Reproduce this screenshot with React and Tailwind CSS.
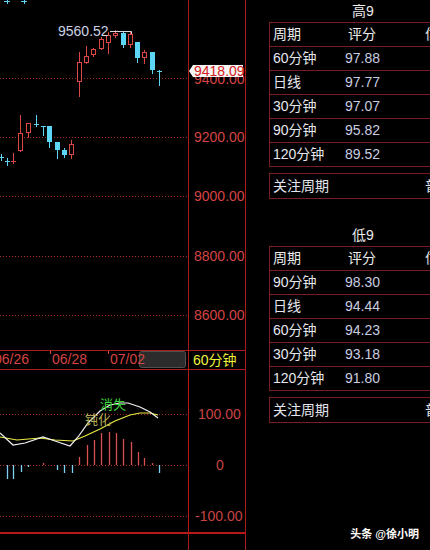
import React from "react";

const RED = "#dc4848";
const CYAN = "#5cd6f4";
const GRID = "#a32a2a";

// [x, bodyTop, bodyBottom, high, low, up]
const candles = [
  [1, 157, 157, 154, 160, 0],
  [7, 161, 161, 158, 165, 0],
  [13, 161, 161, 153, 163, 1],
  [20, 133, 151, 115, 151, 1],
  [28, 123, 133, 123, 137, 1],
  [36, 124, 124, 115, 126, 0],
  [43, 126, 126, 126, 135, 0],
  [49, 126, 142, 126, 147, 0],
  [57, 142, 150, 142, 158, 0],
  [64, 150, 155, 148, 157, 0],
  [71, 144, 155, 140, 158, 1],
  [79, 62, 82, 52, 96, 1],
  [86, 56, 63, 46, 63, 1],
  [93, 49, 55, 48, 56, 1],
  [101, 39, 49, 37, 49, 1],
  [108, 35, 43, 32, 53, 1],
  [115, 33, 36, 30, 37, 1],
  [123, 33, 45, 31, 47, 0],
  [130, 34, 45, 31, 47, 1],
  [137, 42, 58, 42, 62, 0],
  [144, 52, 58, 50, 63, 1],
  [152, 52, 70, 52, 73, 0],
  [159, 71, 71, 70, 85, 0],
];

// [x, end] relative to zero line at 465
const bars = [
  [7, 479], [13, 479], [21, 472], [28, 467], [43, 463], [57, 470], [64, 473], [72, 473],
  [79, 457], [87, 445], [94, 440], [101, 433], [109, 432], [116, 433], [123, 439],
  [131, 442], [138, 452], [144, 458], [152, 463], [159, 473],
];

const white = "0,433 13,445 25,443 43,437 55,441 70,446 78,437 88,423 100,411 110,405 120,403 128,403 140,407 150,412 158,418";
const yellow = "0,437 17,440 40,438 55,440 73,441 85,436 100,429 115,421 130,415 140,413 150,413 158,415";

const high9 = [
  ["60分钟", "97.88"],
  ["日线", "97.77"],
  ["30分钟", "97.07"],
  ["90分钟", "95.82"],
  ["120分钟", "89.52"],
];

const low9 = [
  ["90分钟", "98.30"],
  ["日线", "94.44"],
  ["60分钟", "94.23"],
  ["30分钟", "93.18"],
  ["120分钟", "91.80"],
];

function Candle({ c }) {
  const [x, t, b, h, l, up] = c;
  const color = up ? RED : CYAN;
  return (
    <g>
      <line x1={x + 0.5} x2={x + 0.5} y1={h} y2={l + 1} stroke={color} />
      {b - t < 2 ? (
        <line x1={x - 2} x2={x + 3} y1={t + 0.5} y2={t + 0.5} stroke={color} />
      ) : up ? (
        <rect x={x - 1.5} y={t + 0.5} width={4} height={b - t - 1} fill="#000" stroke={color} />
      ) : (
        <rect x={x - 2} y={t} width={5} height={b - t} fill={color} />
      )}
    </g>
  );
}

function ScoreTable({ title, rows }) {
  return (
    <div className="w-[188px] shrink-0">
      <div className="h-[22px] flex items-center justify-center text-[14px] text-[#ececec]">{title}</div>
      <div className="border-t border-l border-r border-[#7a1c22]">
        <div className="h-[24px] flex items-center border-b border-[#7a1c22] text-[14px] text-[#ececec]">
          <span className="w-[75px] pl-[3px]">周期</span>
          <span className="w-[78px] pl-[3px]">评分</span>
          <span className="pl-[2px]">信号</span>
        </div>
        {rows.map(([p, s]) => (
          <div key={p} className="h-[24px] flex items-center border-b border-[#7a1c22] text-[14px]">
            <span className="w-[75px] pl-[3px] text-[#e6e6ee]">{p}</span>
            <span className="w-[78px] text-[#c9cde0]">{s}</span>
          </div>
        ))}
      </div>
      <div className="mt-[6px] h-[26px] flex items-center border border-[#7a1c22] text-[14px] text-[#e6e6ee]">
        <span className="w-[153px] pl-[3px]">关注周期</span>
        <span className="pl-[2px]">普通</span>
      </div>
    </div>
  );
}

export default function App() {
  return (
    <div className="w-[430px] h-[550px] bg-black flex overflow-hidden font-['Liberation_Sans','Noto_Sans_CJK_SC',sans-serif]">
      {/* left: chart */}
      <div className="w-[246px] shrink-0 flex flex-col border-r border-[#a81c1c]">
        <div className="h-[350px] flex">
          <div className="w-[189px] border-r border-[#a81c1c]">
            <svg width="188" height="350" viewBox="0 0 188 350">
              {[78, 137, 196, 256, 315].map((y) => (
                <line key={y} x1="0" x2="188" y1={y + 0.5} y2={y + 0.5} stroke={GRID} strokeDasharray="1 2" />
              ))}
              <path d="M4 1.5H10M7.5 0V4M21 1.5H27M24.5 0V4" stroke={CYAN} />
              {candles.map((c, i) => (
                <Candle key={i} c={c} />
              ))}
              <polyline points="110,31.5 131.5,31.5 131.5,34" fill="none" stroke="#d8d8e0" />
              <text x="58" y="36" fontSize="14" fill="#cdd2e6">9560.52</text>
            </svg>
          </div>
          <svg width="56" height="350" viewBox="189 0 56 350">
            {[["9200.00", 142], ["9000.00", 201], ["8800.00", 261], ["8600.00", 320], ["9400.00", 84]].map(([t, y]) => (
              <text key={t} x="194" y={y} fontSize="14" fill="#d64444">{t}</text>
            ))}
            <polygon points="189,71 193,65 243,65 243,77 193,77" fill="#f6f6f6" />
            <text x="194" y="76" fontSize="14" fill="#d42020">9418.09</text>
          </svg>
        </div>

        {/* date row */}
        <div className="h-[20px] flex border-t border-b border-[#a81c1c]">
          <div className="w-[189px] border-r border-[#a81c1c]">
            <svg width="188" height="18" viewBox="0 351 188 18">
              <rect x="139.5" y="351.5" width="46" height="16" rx="2" fill="#2c2c2c" stroke="#505050" />
              <line x1="50.5" x2="50.5" y1="351" y2="354" stroke={RED} />
              <line x1="108.5" x2="108.5" y1="351" y2="354" stroke={RED} />
              <text x="-6" y="364" fontSize="14" fill="#d64444">06/26</text>
              <text x="52" y="364" fontSize="14" fill="#d64444">06/28</text>
              <text x="110" y="364" fontSize="14" fill="#d64444">07/02</text>
            </svg>
          </div>
          <div className="flex items-center pl-[4px] text-[14px] text-[#f2f23c]">60分钟</div>
        </div>

        {/* indicator */}
        <div className="h-[164px] flex border-b-2 border-[#b81818]">
          <div className="w-[189px] border-r border-[#b81818]">
            <svg width="188" height="162" viewBox="0 370 188 162">
              {[414, 465, 516].map((y) => (
                <line key={y} x1="0" x2="188" y1={y + 0.5} y2={y + 0.5} stroke={GRID} strokeDasharray="1 2" />
              ))}
              {bars.map(([x, e]) => (
                <line
                  key={x}
                  x1={x + 0.5}
                  x2={x + 0.5}
                  y1="465"
                  y2={e}
                  stroke={e > 465 ? "#7fd0ee" : "#d85050"}
                  strokeWidth="1.3"
                />
              ))}
              <polyline points={yellow} fill="none" stroke="#ecec44" strokeWidth="1.2" />
              <polyline points={white} fill="none" stroke="#f2f2f2" strokeWidth="1.2" />
              <text x="100" y="409" fontSize="13" fill="#3ed23e">消失</text>
              <text x="85" y="424" fontSize="13" fill="#b4ac52">钝化</text>
            </svg>
          </div>
          <svg width="56" height="162" viewBox="189 370 56 162">
            <text x="198" y="419" fontSize="14" fill="#c84444">100.00</text>
            <text x="216" y="470" fontSize="14" fill="#c84444">0</text>
            <text x="195" y="521" fontSize="14" fill="#c84444">-100.00</text>
          </svg>
        </div>

        <div className="flex-1 flex">
          <div className="w-[189px] border-r border-[#a81c1c]" />
        </div>
      </div>

      {/* right: scores */}
      <div className="flex-1 flex flex-col pl-[23px] overflow-hidden">
        <ScoreTable title="高9" rows={high9} />
        <div className="mt-[25px]">
          <ScoreTable title="低9" rows={low9} />
        </div>
        <div className="mt-auto self-end pr-[11px] pb-[10px] text-[11px] leading-[12px] font-bold text-white [text-shadow:0_0_2px_#000]">
          头条 @徐小明
        </div>
      </div>
    </div>
  );
}
